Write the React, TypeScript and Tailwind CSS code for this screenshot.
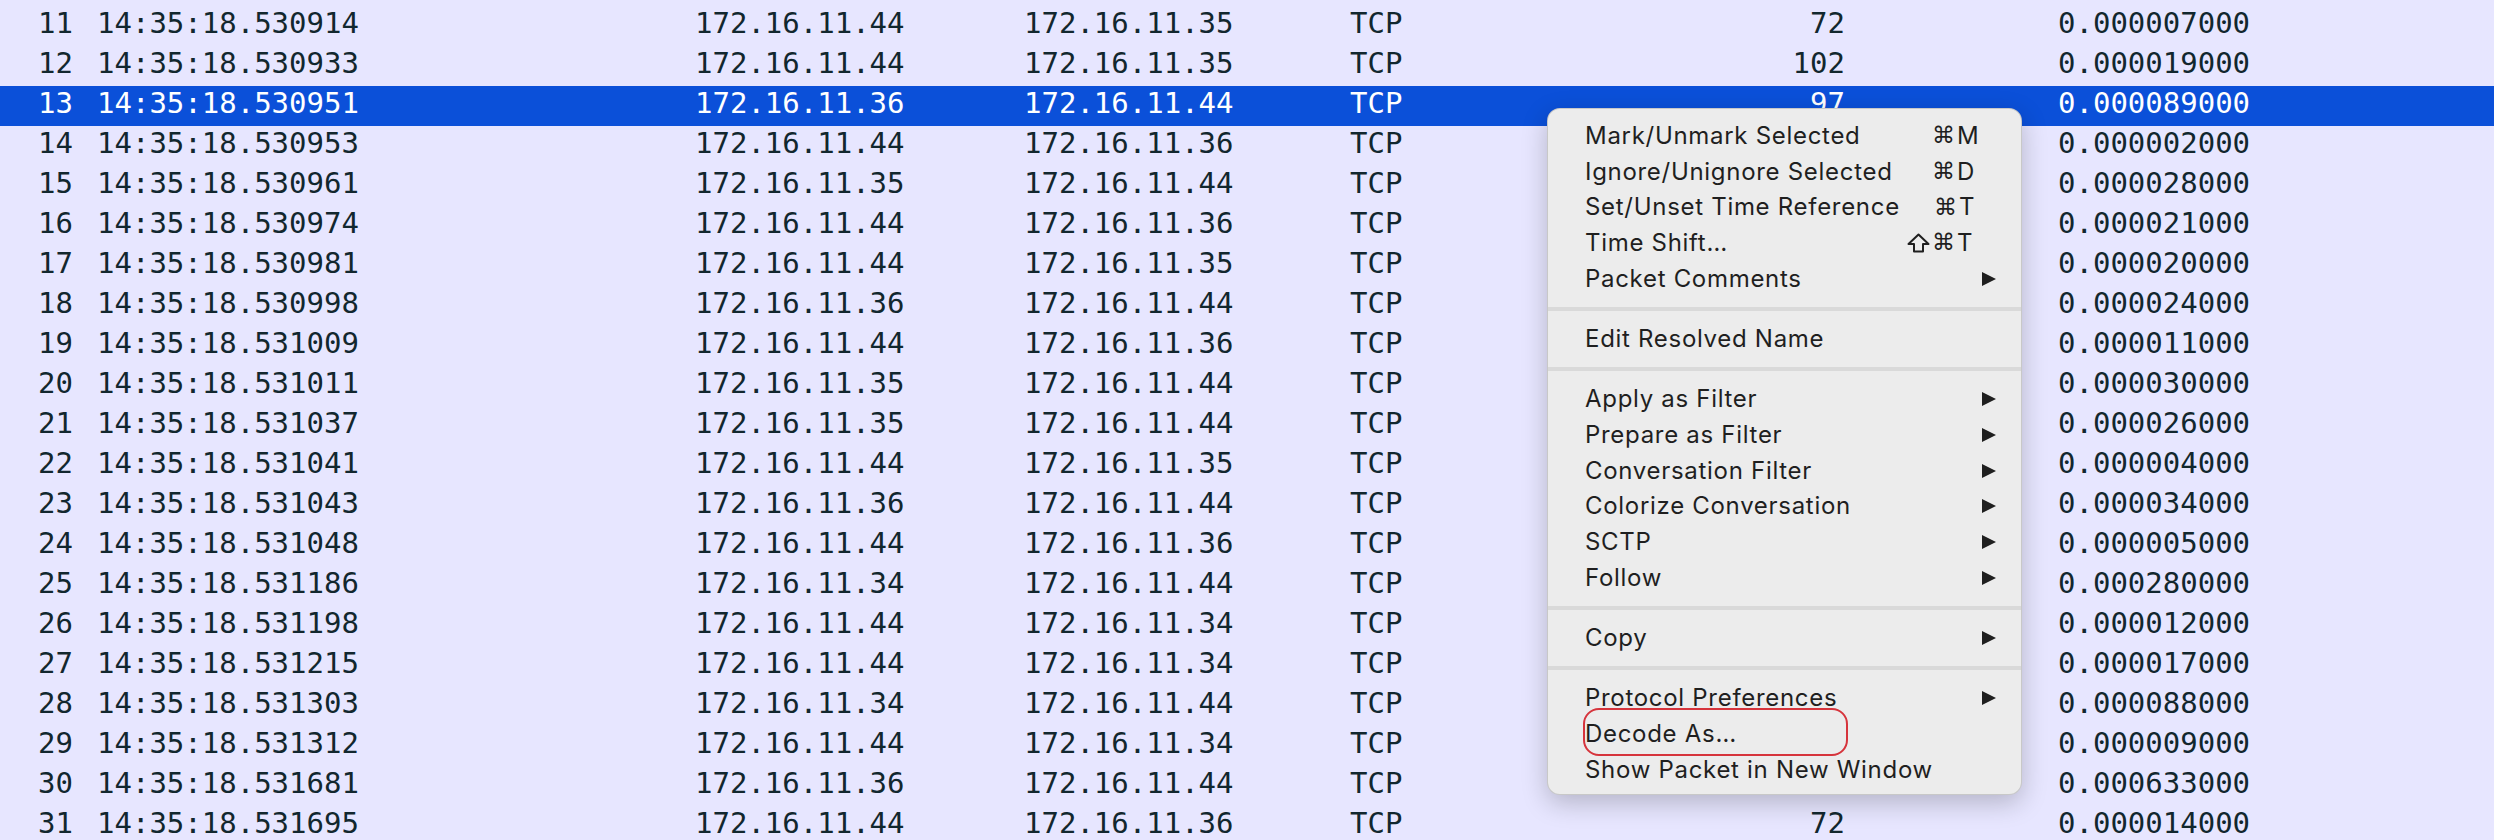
import React from "react"

type Packet = {
  no: number
  time: string
  src: string
  dst: string
  len: number
  delta: string
}

const packets: Packet[] = [
  {no: 11, time: "14:35:18.530914", src: "172.16.11.44", dst: "172.16.11.35", len: 72, delta: "0.000007000"},
  {no: 12, time: "14:35:18.530933", src: "172.16.11.44", dst: "172.16.11.35", len: 102, delta: "0.000019000"},
  {no: 13, time: "14:35:18.530951", src: "172.16.11.36", dst: "172.16.11.44", len: 97, delta: "0.000089000"},
  {no: 14, time: "14:35:18.530953", src: "172.16.11.44", dst: "172.16.11.36", len: 66, delta: "0.000002000"},
  {no: 15, time: "14:35:18.530961", src: "172.16.11.35", dst: "172.16.11.44", len: 66, delta: "0.000028000"},
  {no: 16, time: "14:35:18.530974", src: "172.16.11.44", dst: "172.16.11.36", len: 72, delta: "0.000021000"},
  {no: 17, time: "14:35:18.530981", src: "172.16.11.44", dst: "172.16.11.35", len: 72, delta: "0.000020000"},
  {no: 18, time: "14:35:18.530998", src: "172.16.11.36", dst: "172.16.11.44", len: 66, delta: "0.000024000"},
  {no: 19, time: "14:35:18.531009", src: "172.16.11.44", dst: "172.16.11.36", len: 72, delta: "0.000011000"},
  {no: 20, time: "14:35:18.531011", src: "172.16.11.35", dst: "172.16.11.44", len: 97, delta: "0.000030000"},
  {no: 21, time: "14:35:18.531037", src: "172.16.11.35", dst: "172.16.11.44", len: 66, delta: "0.000026000"},
  {no: 22, time: "14:35:18.531041", src: "172.16.11.44", dst: "172.16.11.35", len: 72, delta: "0.000004000"},
  {no: 23, time: "14:35:18.531043", src: "172.16.11.36", dst: "172.16.11.44", len: 66, delta: "0.000034000"},
  {no: 24, time: "14:35:18.531048", src: "172.16.11.44", dst: "172.16.11.36", len: 72, delta: "0.000005000"},
  {no: 25, time: "14:35:18.531186", src: "172.16.11.34", dst: "172.16.11.44", len: 97, delta: "0.000280000"},
  {no: 26, time: "14:35:18.531198", src: "172.16.11.44", dst: "172.16.11.34", len: 72, delta: "0.000012000"},
  {no: 27, time: "14:35:18.531215", src: "172.16.11.44", dst: "172.16.11.34", len: 72, delta: "0.000017000"},
  {no: 28, time: "14:35:18.531303", src: "172.16.11.34", dst: "172.16.11.44", len: 66, delta: "0.000088000"},
  {no: 29, time: "14:35:18.531312", src: "172.16.11.44", dst: "172.16.11.34", len: 72, delta: "0.000009000"},
  {no: 30, time: "14:35:18.531681", src: "172.16.11.36", dst: "172.16.11.44", len: 66, delta: "0.000633000"},
  {no: 31, time: "14:35:18.531695", src: "172.16.11.44", dst: "172.16.11.36", len: 72, delta: "0.000014000"},
]

type MenuEntry =
  | {kind: "sep"}
  | {kind: "item"; label: string; shift?: boolean; key?: string; sub?: boolean}

const menu: MenuEntry[] = [
  {kind: "item", label: "Mark/Unmark Selected", key: "M"},
  {kind: "item", label: "Ignore/Unignore Selected", key: "D"},
  {kind: "item", label: "Set/Unset Time Reference", key: "T"},
  {kind: "item", label: "Time Shift…", shift: true, key: "T"},
  {kind: "item", label: "Packet Comments", sub: true},
  {kind: "sep"},
  {kind: "item", label: "Edit Resolved Name"},
  {kind: "sep"},
  {kind: "item", label: "Apply as Filter", sub: true},
  {kind: "item", label: "Prepare as Filter", sub: true},
  {kind: "item", label: "Conversation Filter", sub: true},
  {kind: "item", label: "Colorize Conversation", sub: true},
  {kind: "item", label: "SCTP", sub: true},
  {kind: "item", label: "Follow", sub: true},
  {kind: "sep"},
  {kind: "item", label: "Copy", sub: true},
  {kind: "sep"},
  {kind: "item", label: "Protocol Preferences", sub: true},
  {kind: "item", label: "Decode As…"},
  {kind: "item", label: "Show Packet in New Window"},
]

/**
 * One line of the packet list
 */
function PacketRow({packet, selected}: {packet: Packet; selected: boolean}) {
  return (
    <div
      className={
        selected
          ? "flex items-center h-[40px] pb-[6px] pl-[38px] bg-[#0b50d9] text-white"
          : "flex items-center h-[40px] pb-[6px] pl-[38px] text-[#12272e]"
      }
    >
      <span className="w-[59px]">{packet.no}</span>
      <span className="w-[598px]">{packet.time}</span>
      <span className="w-[329px]">{packet.src}</span>
      <span className="w-[326px]">{packet.dst}</span>
      <span className="w-[200px]">TCP</span>
      <span className="w-[295px] text-right">{packet.len}</span>
      <span className="pl-[213px]">{packet.delta}</span>
    </div>
  )
}

function SubmenuArrow() {
  return (
    <svg width="16" height="16" viewBox="0 0 16 16" className="shrink-0">
      <polygon points="1,1 15,8 1,15" fill="#1f1f1f" />
    </svg>
  )
}

// hollow shift arrow, the font one is too thin
function ShiftGlyph() {
  return (
    <svg width="23" height="20" viewBox="0 0 23 20" className="shrink-0 mr-[2px]">
      <polygon
        points="11.5,1.5 21.5,11 16,11 16,18.5 7,18.5 7,11 1.5,11"
        fill="none"
        stroke="#1f1f1f"
        strokeWidth="2"
        strokeLinejoin="round"
      />
    </svg>
  )
}

/**
 * The right-click menu over the packet list
 */
function ContextMenu() {
  return (
    <div className="absolute left-[1547px] top-[108px] w-[475px] h-[687px] py-[9px] rounded-[13px] bg-[#ececec] border border-black/15 shadow-[0_8px_26px_rgba(0,0,0,0.22)] text-[#1f1f1f] text-[24px] tracking-[0.7px] font-['Inter','DejaVu_Sans',sans-serif]">
      {menu.map((entry, i) =>
        entry.kind === "sep" ? (
          <div key={i} className="flex items-center h-[24.6px]">
            <div className="w-full h-[4px] bg-[#d9d9d9]" />
          </div>
        ) : (
          <div
            key={i}
            className="flex items-center h-[35.7px] pl-[37px] pr-[24px] leading-none"
          >
            <span className="flex-1 whitespace-nowrap">{entry.label}</span>
            {entry.key && (
              <>
                <span className="flex items-center justify-end w-[60px] font-['DejaVu_Sans',sans-serif] text-[23px] tracking-normal">
                  {entry.shift && <ShiftGlyph />}
                  ⌘
                </span>
                <span className="w-[42px] pl-[2px]">{entry.key}</span>
              </>
            )}
            {entry.sub && <SubmenuArrow />}
          </div>
        ),
      )}
      <div className="absolute left-[35px] top-[599px] w-[265px] h-[48px] rounded-[16px] border-2 border-[#d6343c]" />
    </div>
  )
}

export default function App() {
  return (
    <div className="relative w-[2494px] h-[840px] overflow-hidden bg-[#e7e6ff] font-['DejaVu_Sans_Mono',monospace] text-[29px] leading-none whitespace-pre">
      <div className="h-[6px]" />
      {packets.map(packet => (
        <PacketRow key={packet.no} packet={packet} selected={packet.no === 13} />
      ))}
      <ContextMenu />
    </div>
  )
}
